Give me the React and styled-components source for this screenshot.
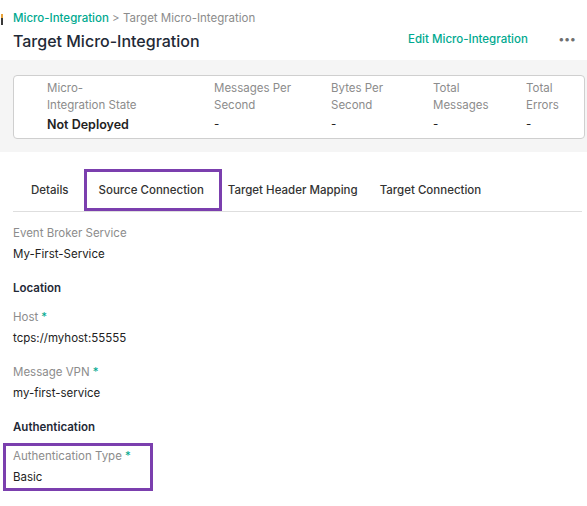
import React from "react";
import styled, { createGlobalStyle } from "styled-components";

const GlobalStyle = createGlobalStyle`
  body {
    margin: 0;
    background: #fff;
    font-family: Inter, "Noto Sans", sans-serif;
    color: #333;
  }
`;

const TEAL = "#00a98f";
const PURPLE = "#7b3fae";

const Page = styled.div`
  position: relative;
  width: 587px;
  height: 506px;
  overflow: hidden;
`;

const EdgeMark = styled.span`
  position: absolute;
  left: 1px;
  top: 14px;
  width: 2px;
  height: 11px;
  background: linear-gradient(#e8a33a 0 35%, #3a3a3a 35% 100%);
`;

const Header = styled.div`
  display: flex;
  align-items: flex-end;
  justify-content: space-between;
  padding: 8px 11px 6px 13px;
`;

const Crumbs = styled.div`
  font-size: 11.5px;
  line-height: 20px;
  color: #8c8c8c;
`;

const CrumbLink = styled.span`
  color: ${TEAL};
  font-weight: 500;
`;

const Title = styled.h1`
  margin: 0;
  font-size: 16px;
  line-height: 26px;
  font-weight: 500;
  color: #1f2a37;
`;

const Actions = styled.div`
  display: flex;
  align-items: center;
  gap: 31px;
  padding-bottom: 8px;
`;

const EditLink = styled.span`
  color: ${TEAL};
  font-size: 11.5px;
  font-weight: 500;
`;

const Dots = styled.span`
  color: #6f6f6f;
  font-size: 11px;
  font-weight: 700;
  letter-spacing: 0.5px;
`;

const Band = styled.div`
  background: #f5f5f5;
  padding: 15px 2px 13px 13px;
`;

const Card = styled.div`
  display: flex;
  background: #fff;
  border: 1px solid #cfcfcf;
  border-radius: 4px;
  height: 58px;
  padding: 4px 0 0 33px;
  box-sizing: content-box;
`;

const Stat = styled.div`
  width: ${(p) => p.$w}px;
  flex-shrink: 0;
  font-size: 11.5px;
  line-height: 17px;
`;

const StatLabel = styled.div`
  color: #8c8c8c;
`;

const StatValue = styled.div`
  margin-top: 1px;
  line-height: 19px;
  font-size: ${(p) => (p.$bold ? "12.5px" : "11.5px")};
  font-weight: ${(p) => (p.$bold ? 600 : 400)};
  color: #222;
`;

const Divider = styled.div`
  width: 1px;
  height: 25px;
  background: #d4d4d4;
  align-self: center;
  margin-right: 37px;
  margin-top: -4px;
`;

const TabBar = styled.div`
  display: flex;
  margin: 17px 5px 0 13px;
  border-bottom: 1px solid #dedede;
`;

const Tab = styled.div`
  display: flex;
  align-items: center;
  height: 42px;
  box-sizing: border-box;
  padding: ${(p) => p.$pad};
  font-size: 11.5px;
  font-weight: 500;
  color: #333;
  white-space: nowrap;
  border: ${(p) => (p.$marked ? `3px solid ${PURPLE}` : "none")};
`;

const Form = styled.div`
  padding: 11px 0 0 13px;
`;

const Field = styled.div`
  margin-bottom: 14px;
  font-size: 11.5px;
  line-height: 20px;
`;

const MarkedField = styled(Field)`
  width: 130px;
  margin: -3px 0 0 -10px;
  padding: 0 7px 1px;
  border: 3px solid ${PURPLE};
`;

const Label = styled.div`
  color: #8c8c8c;
`;

const Required = styled.span`
  color: ${TEAL};
  margin-left: 3px;
`;

const Value = styled.div`
  margin-top: 1px;
  color: #222;
`;

const Heading = styled.div`
  font-size: 11.5px;
  line-height: 20px;
  font-weight: 600;
  color: #1f2a37;
  margin-bottom: 9px;
`;

const stats = [
  { label: ["Micro-", "Integration State"], value: "Not Deployed", bold: true, w: 130 },
  { label: ["Messages Per", "Second"], value: "-", w: 117 },
  { label: ["Bytes Per", "Second"], value: "-", w: 102 },
  { label: ["Total", "Messages"], value: "-", w: 93 },
  { label: ["Total", "Errors"], value: "-", w: 60 },
];

const tabs = [
  { name: "Details", pad: "0 15px 0 18px" },
  { name: "Source Connection", pad: "0 15px 0 12px", marked: true },
  { name: "Target Header Mapping", pad: "0 10px 0 6px" },
  { name: "Target Connection", pad: "0 12px 0 12px" },
];

function FormField({ label, value, required, marked }) {
  const Wrap = marked ? MarkedField : Field;
  return (
    <Wrap>
      <Label>
        {label}
        {required && <Required>*</Required>}
      </Label>
      <Value>{value}</Value>
    </Wrap>
  );
}

export default function App() {
  return (
    <Page>
      <GlobalStyle />
      <EdgeMark />
      <Header>
        <div>
          <Crumbs>
            <CrumbLink>Micro-Integration</CrumbLink> &gt; Target Micro-Integration
          </Crumbs>
          <Title>Target Micro-Integration</Title>
        </div>
        <Actions>
          <EditLink>Edit Micro-Integration</EditLink>
          <Dots>•••</Dots>
        </Actions>
      </Header>

      <Band>
        <Card>
          {stats.map((s, i) => (
            <React.Fragment key={s.label.join(" ")}>
              <Stat $w={s.w}>
                <StatLabel>
                  {s.label[0]}
                  <br />
                  {s.label[1]}
                </StatLabel>
                <StatValue $bold={s.bold}>{s.value}</StatValue>
              </Stat>
              {i === 0 && <Divider />}
            </React.Fragment>
          ))}
        </Card>
      </Band>

      <TabBar>
        {tabs.map((t) => (
          <Tab key={t.name} $pad={t.pad} $marked={t.marked}>
            {t.name}
          </Tab>
        ))}
      </TabBar>

      <Form>
        <FormField label="Event Broker Service" value="My-First-Service" />
        <Heading>Location</Heading>
        <FormField label="Host" value="tcps://myhost:55555" required />
        <FormField label="Message VPN" value="my-first-service" required />
        <Heading>Authentication</Heading>
        <FormField label="Authentication Type" value="Basic" required marked />
      </Form>
    </Page>
  );
}
